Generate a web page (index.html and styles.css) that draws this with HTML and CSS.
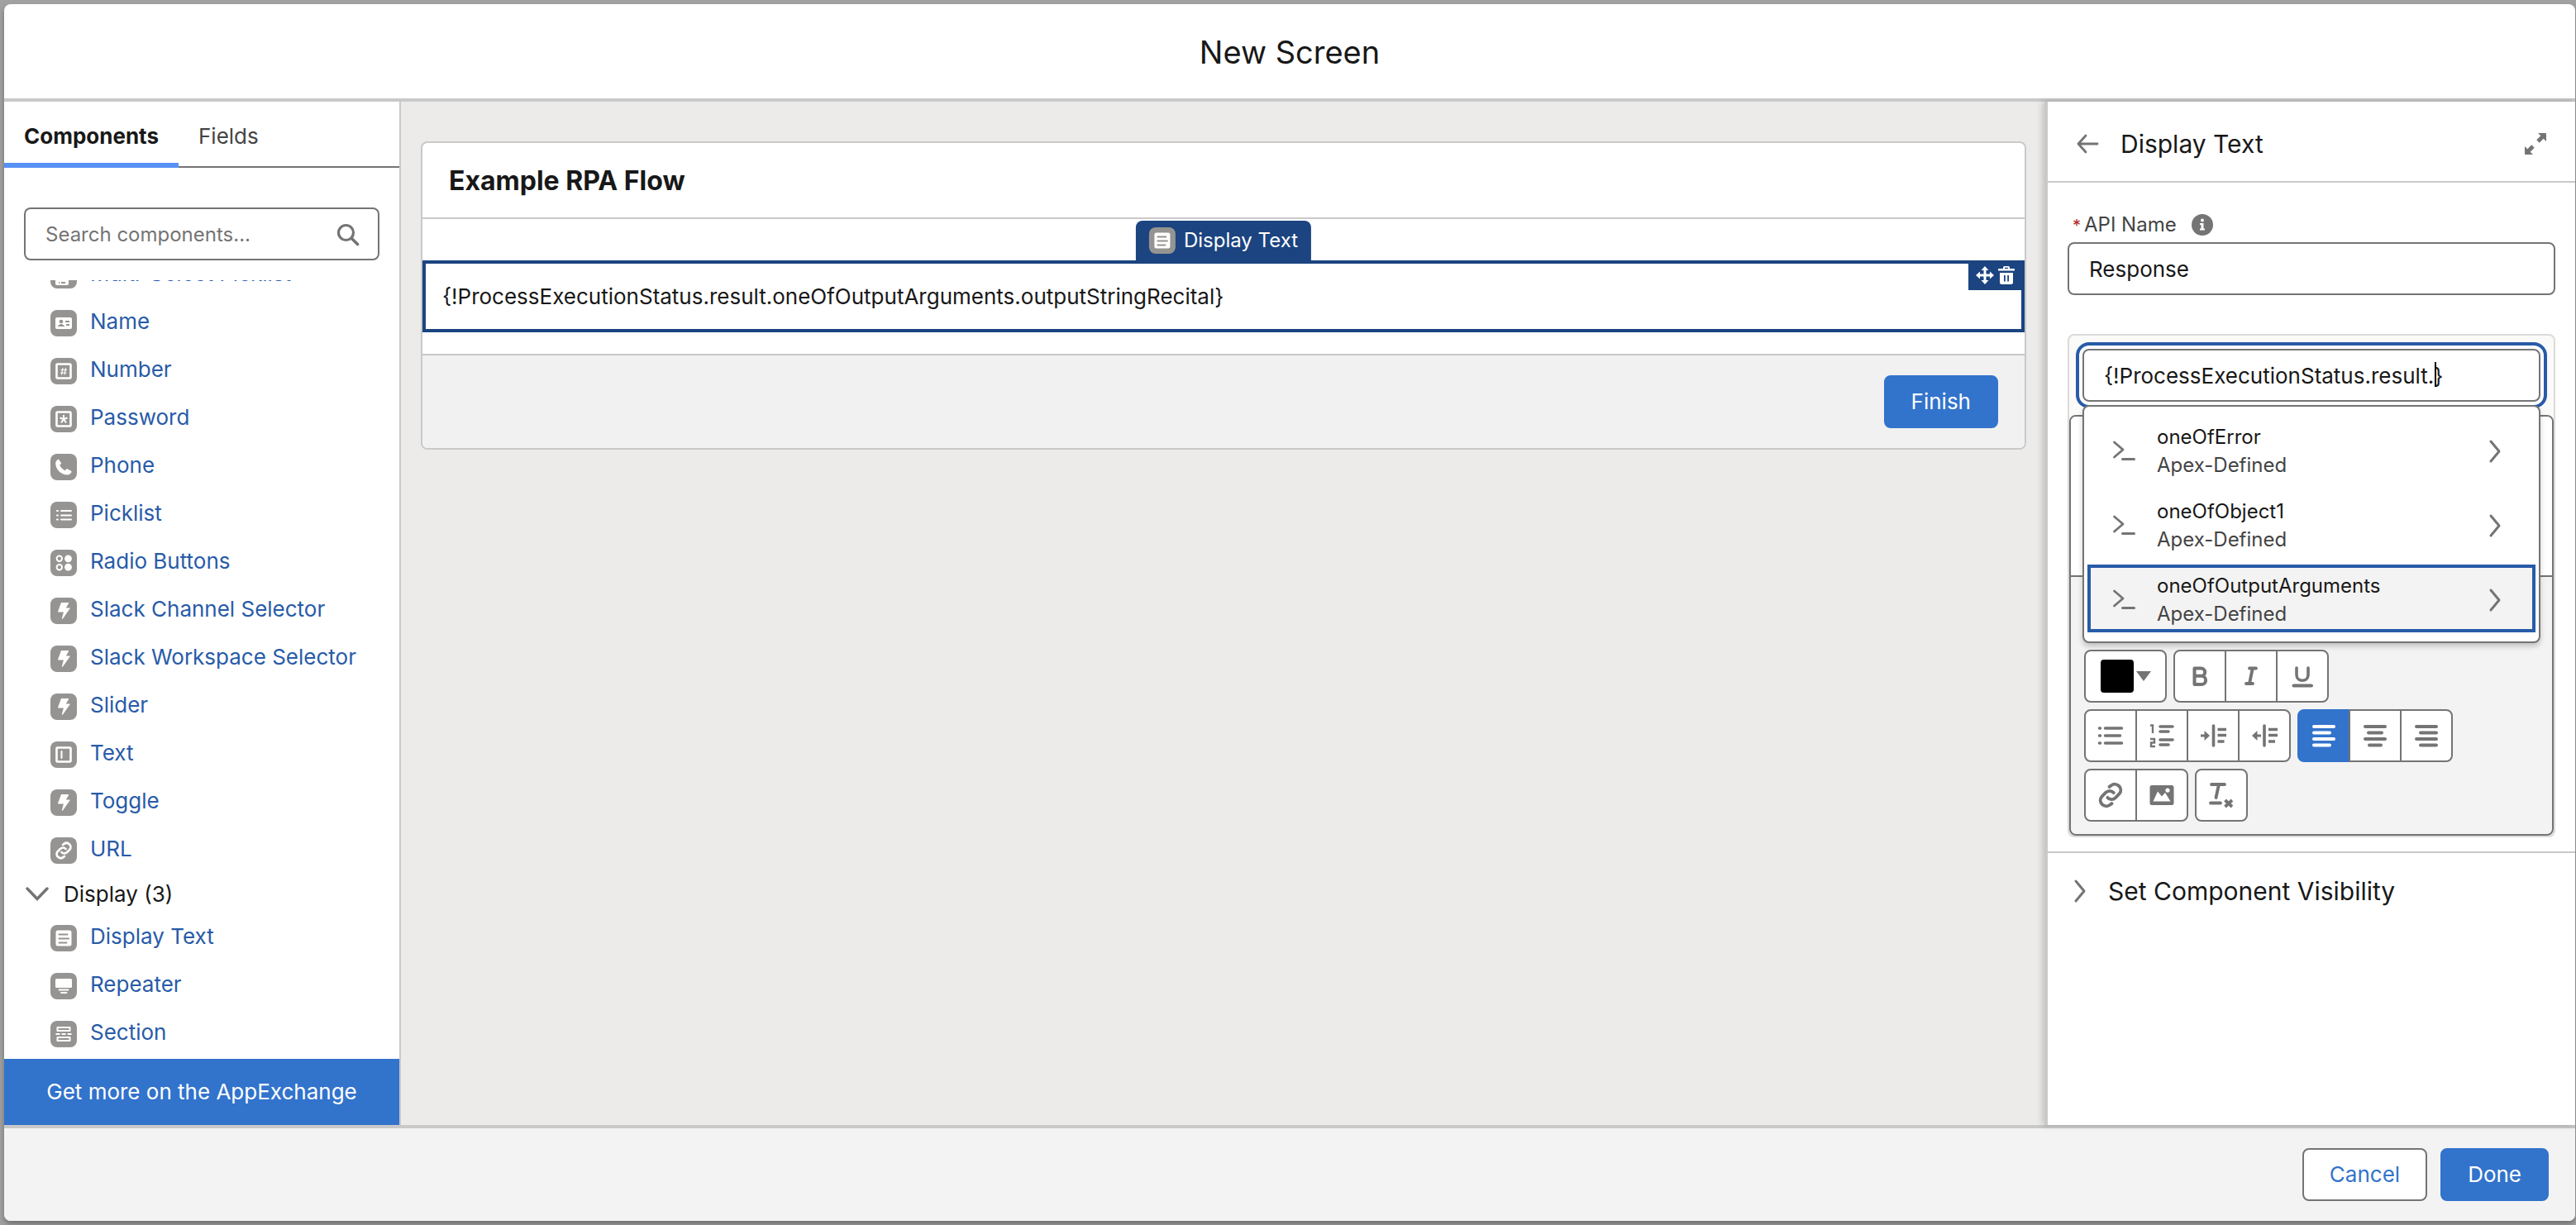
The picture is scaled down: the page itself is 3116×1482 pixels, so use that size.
FILE: index.html
```html
<!DOCTYPE html>
<html lang="en">
<head>
<meta charset="utf-8">
<title>New Screen</title>
<link rel="stylesheet" href="styles.css">
</head>
<body>
<svg class="sprite" aria-hidden="true">
  <symbol id="i-list" viewBox="0 0 32 32"><path d="M8 11h1M8 16.500h1M8 21.500h1M13 11h12M13 16.500h12M13 21.500h12" stroke="currentColor" stroke-width="2" stroke-linecap="round"/></symbol>
  <symbol id="i-multi" viewBox="0 0 32 32"><rect x="6" y="6" width="16" height="22" rx="2" fill="currentColor"/><path d="M10 25h1M13 25h5" stroke="#969492" stroke-width="2"/></symbol>
  <symbol id="i-name" viewBox="0 0 32 32"><rect x="6" y="9" width="20" height="14" rx="2" fill="currentColor"/><circle cx="13" cy="14" r="2.300" fill="#969492"/><path d="M9 20c0-2 3-2 3-3h2c0 1 3 1 3 3zM18 13h5v2h-5zM19 17h4v2h-4z" fill="#969492"/></symbol>
  <symbol id="i-number" viewBox="0 0 32 32"><rect x="7.500" y="7.500" width="17" height="17" rx="1" fill="none" stroke="currentColor" stroke-width="2.600"/><path d="M15 12l-1.500 8.500M18.500 12L17 20.500M12.500 14.500h7.500M12 18h7.500" stroke="currentColor" stroke-width="1.200"/></symbol>
  <symbol id="i-password" viewBox="0 0 32 32"><rect x="7.500" y="7.500" width="17" height="17" rx="1" fill="none" stroke="currentColor" stroke-width="2.600"/><path d="M16 11v5M16 16l-4.500-1.500M16 16l4.500-1.500M16 16l-3 4.500M16 16l3 4.500" stroke="currentColor" stroke-width="2"/></symbol>
  <symbol id="i-phone" viewBox="0 0 32 32"><path d="M6.500 9.500l2-2.300c.7-.7 1.500-.6 2 .2l2.300 3.300c.4.700.3 1.400-.3 1.900l-1.300 1.200c1.300 3 3.400 5.100 6.500 6.500l1.300-1.500c.5-.6 1.200-.7 1.900-.3l4 2.200c.8.500.9 1.300.3 2l-2.200 2.300C13 27.500 4.500 17 6.500 9.500z" fill="currentColor"/></symbol>
  <symbol id="i-radio" viewBox="0 0 32 32"><circle cx="10.800" cy="10.800" r="3.200" fill="none" stroke="currentColor" stroke-width="2"/><circle cx="10.800" cy="21.200" r="3.200" fill="none" stroke="currentColor" stroke-width="2"/><circle cx="21.500" cy="10.800" r="4.400" fill="currentColor"/><circle cx="21.500" cy="21.200" r="4.400" fill="currentColor"/></symbol>
  <symbol id="i-bolt" viewBox="0 0 32 32"><path d="M13 6h8.500c.6 0 .8.500.5 1l-3.200 5.500H23c.6 0 .8.600.4 1L15 25.500c-.5.600-1.300.2-1.100-.5l2-7.500h-6c-.6 0-.9-.5-.7-1z" fill="currentColor"/></symbol>
  <symbol id="i-text" viewBox="0 0 32 32"><rect x="7.500" y="7.500" width="17" height="17" rx="1" fill="none" stroke="currentColor" stroke-width="2.600"/><path d="M13.500 12v8" stroke="currentColor" stroke-width="2" stroke-linecap="round"/></symbol>
  <symbol id="i-link" viewBox="0 0 32 32"><g fill="none" stroke="currentColor" stroke-width="2.700" stroke-linecap="round"><path d="M15 9l1.500-1.100c2-1.500 4.700-1.200 6.500.5 1.800 1.800 1.900 4.600.3 6.400l-3.200 3.300c-2 1.900-4.900 1.900-6.600-.1"/><path d="M17 23l-1.500 1.100c-2 1.500-4.700 1.200-6.500-.5-1.800-1.800-1.900-4.600-.3-6.400l3.200-3.300c2-1.900 4.900-1.900 6.600.1"/></g></symbol>
  <symbol id="i-display" viewBox="0 0 32 32"><rect x="6.500" y="6.500" width="19" height="19" rx="2.500" fill="currentColor"/><path d="M10.500 11.500h10M10.500 16.500h11.500M10.500 21.500h9" stroke="#969492" stroke-width="2" stroke-linecap="round"/></symbol>
  <symbol id="i-repeater" viewBox="0 0 32 32"><rect x="6" y="7" width="20" height="11" rx="1.500" fill="currentColor"/><path d="M10.500 20.500h11M13 24h6.500" stroke="currentColor" stroke-width="1.800" stroke-linecap="round"/></symbol>
  <symbol id="i-section" viewBox="0 0 32 32"><path d="M8.500 8h15v4h-15zM8.500 20h15v4h-15z" fill="none" stroke="currentColor" stroke-width="2" stroke-linejoin="round"/><path d="M6.500 16h5M13.500 16h5M20.500 16h5" stroke="currentColor" stroke-width="2"/></symbol>
  <symbol id="i-right" viewBox="0 0 32 32"><path d="M10 4l10 12-10 12" fill="none" stroke="currentColor" stroke-width="3" stroke-linecap="round" stroke-linejoin="round"/></symbol>
  <symbol id="i-apex" viewBox="0 0 32 32"><path d="M4.500 5l10.500 9L4.500 23" fill="none" stroke="currentColor" stroke-width="2.800" stroke-linecap="round" stroke-linejoin="round"/><path d="M14.500 25.500h14" stroke="currentColor" stroke-width="3" stroke-linecap="round"/></symbol>
</svg>
<div class="modal" role="dialog" aria-labelledby="dialog-title">
  <header class="modal-header"><h1 id="dialog-title">New Screen</h1></header>
  <div class="workspace">
    <aside class="palette">
      <div class="tabs" role="tablist">
        <button class="tab tab-active" role="tab" aria-selected="true">Components</button>
        <button class="tab" role="tab" aria-selected="false">Fields</button>
      </div>
      <div class="search">
        <input class="field" type="search" placeholder="Search components..." aria-label="Search components">
        <svg class="search-icon" viewBox="0 0 28 28"><circle cx="11.500" cy="11.500" r="9" fill="none" stroke="currentColor" stroke-width="3.200"/><path d="M18.500 18.500l7 7" stroke="currentColor" stroke-width="3.600" stroke-linecap="round"/></svg>
      </div>
      <nav class="component-list" aria-label="Components">
        <a class="component" href="#"><svg class="tile"><use href="#i-multi"/></svg>Multi-Select Picklist</a>
        <a class="component" href="#"><svg class="tile"><use href="#i-name"/></svg>Name</a>
        <a class="component" href="#"><svg class="tile"><use href="#i-number"/></svg>Number</a>
        <a class="component" href="#"><svg class="tile"><use href="#i-password"/></svg>Password</a>
        <a class="component" href="#"><svg class="tile"><use href="#i-phone"/></svg>Phone</a>
        <a class="component" href="#"><svg class="tile"><use href="#i-list"/></svg>Picklist</a>
        <a class="component" href="#"><svg class="tile"><use href="#i-radio"/></svg>Radio Buttons</a>
        <a class="component" href="#"><svg class="tile"><use href="#i-bolt"/></svg>Slack Channel Selector</a>
        <a class="component" href="#"><svg class="tile"><use href="#i-bolt"/></svg>Slack Workspace Selector</a>
        <a class="component" href="#"><svg class="tile"><use href="#i-bolt"/></svg>Slider</a>
        <a class="component" href="#"><svg class="tile"><use href="#i-text"/></svg>Text</a>
        <a class="component" href="#"><svg class="tile"><use href="#i-bolt"/></svg>Toggle</a>
        <a class="component" href="#"><svg class="tile"><use href="#i-link"/></svg>URL</a>
        <button class="group-toggle" aria-expanded="true"><svg class="group-chevron" viewBox="0 0 28 18"><path d="M2 2l12 12.500L26 2" fill="none" stroke="currentColor" stroke-width="3.400" stroke-linecap="round"/></svg>Display (3)</button>
        <a class="component" href="#"><svg class="tile"><use href="#i-display"/></svg>Display Text</a>
        <a class="component" href="#"><svg class="tile"><use href="#i-repeater"/></svg>Repeater</a>
        <a class="component" href="#"><svg class="tile"><use href="#i-section"/></svg>Section</a>
      </nav>
      <button class="exchange">Get more on the AppExchange</button>
    </aside>

    <main class="canvas">
      <section class="screen-card">
        <h2 class="screen-title">Example RPA Flow</h2>
        <div class="screen-body">
          <div class="selected">
            <div class="selected-tag"><svg class="tile"><use href="#i-display"/></svg>Display Text</div>
            <p class="selected-text">{!ProcessExecutionStatus.result.oneOfOutputArguments.outputStringRecital}</p>
            <div class="selected-actions">
              <button class="mini" aria-label="Move"><svg viewBox="0 0 24 24"><path d="M12 1l4.500 5h-3v4.500H18v-3l5 4.500-5 4.500v-3h-4.500V18h3L12 23l-4.500-5h3v-4.500H6v3L1 12l5-4.500v3h4.500V6h-3z" fill="currentColor"/></svg></button>
              <button class="mini" aria-label="Delete"><svg viewBox="0 0 24 24"><path fill-rule="evenodd" d="M2.500 4H8V2.500Q8 1 9.500 1h5Q16 1 16 2.500V4h5.500Q22 4 22 5v1.500H2V5q0-1 .5-1zM10 4h4V2.800h-4zM4 9h16v11.500q0 2.500-2.500 2.500h-11Q4 23 4 20.500zM9 12v7.500h1.800V12zM13.200 12v7.500H15V12z" fill="currentColor"/></svg></button>
            </div>
          </div>
        </div>
        <footer class="screen-footer"><button class="button button-primary">Finish</button></footer>
      </section>
    </main>

    <aside class="inspector">
      <header class="inspector-header">
        <button class="icon-button" aria-label="Back"><svg viewBox="0 0 28 28"><path d="M12 4L3 14l9 10M3 14h23" fill="none" stroke="currentColor" stroke-width="2.800" stroke-linecap="round" stroke-linejoin="round"/></svg></button>
        <h2>Display Text</h2>
        <button class="icon-button" aria-label="Expand"><svg viewBox="0 0 28 28"><path d="M17 1h9q1 0 1 1v9l-3.300-3.300-5 5-3.400-3.400 5-5zM1 17l3.300 3.300 5-5 3.400 3.400-5 5L11 27H2q-1 0-1-1z" fill="currentColor"/></svg></button>
      </header>
      <div class="inspector-body">
        <div class="label-row">
          <label for="api-name"><span class="required">*</span>API Name</label>
          <svg class="info" viewBox="0 0 26 26"><circle cx="13" cy="13" r="13" fill="#747474"/><circle cx="13" cy="7.500" r="1.900" fill="#fff"/><path d="M10 11h4.500v6.500H16V19.500h-6v-2h1.500V13H10z" fill="#fff"/></svg>
        </div>
        <input class="field" id="api-name" type="text" value="Response">
        <div class="editor">
          <div class="resource">
            <input class="field field-focus" type="text" value="{!ProcessExecutionStatus.result.}" aria-label="Insert a resource">
            <span class="caret"></span>
            <div class="menu" role="listbox">
              <button class="option" role="option"><svg class="option-icon"><use href="#i-apex"/></svg><span class="option-text"><span>oneOfError</span><span class="option-type">Apex-Defined</span></span><svg class="option-next"><use href="#i-right"/></svg></button>
              <button class="option" role="option"><svg class="option-icon"><use href="#i-apex"/></svg><span class="option-text"><span>oneOfObject1</span><span class="option-type">Apex-Defined</span></span><svg class="option-next"><use href="#i-right"/></svg></button>
              <button class="option option-active" role="option" aria-selected="true"><svg class="option-icon"><use href="#i-apex"/></svg><span class="option-text"><span>oneOfOutputArguments</span><span class="option-type">Apex-Defined</span></span><svg class="option-next"><use href="#i-right"/></svg></button>
            </div>
          </div>
          <div class="rich-text">
            <div class="rich-content"></div>
            <div class="toolbar">
              <div class="tool-row">
                <div class="tools"><button class="tool tool-color" aria-label="Text color"><span class="swatch"></span><svg class="arrow" viewBox="0 0 18 12"><path d="M0 0h18L9 12z" fill="currentColor"/></svg></button></div>
                <div class="tools">
                  <button class="tool" aria-label="Bold"><svg viewBox="0 0 32 32"><path d="M9.500 6.500h8a4.600 4.600 0 010 9.300h-8zM9.500 15.800H18a5 5 0 010 10.200H9.500z" fill="none" stroke="currentColor" stroke-width="4" stroke-linejoin="round"/></svg></button>
                  <button class="tool" aria-label="Italic"><svg viewBox="0 0 32 32"><path d="M14 6.500h8M10 25h8M17.800 6.500L14 25" fill="none" stroke="currentColor" stroke-width="3.800" stroke-linecap="round"/></svg></button>
                  <button class="tool" aria-label="Underline"><svg viewBox="0 0 32 32"><path d="M9 6v8.500c0 9 14 9 14 0V6" fill="none" stroke="currentColor" stroke-width="3.600" stroke-linecap="round"/><path d="M5.500 27.500h21.500" stroke="currentColor" stroke-width="4" stroke-linecap="round"/></svg></button>
                </div>
              </div>
              <div class="tool-row">
                <div class="tools">
                  <button class="tool" aria-label="Bulleted list"><svg viewBox="0 0 32 32"><path d="M2.500 7h1M2.500 16h1M2.500 25h1M9.500 7h20M9.500 16h18M9.500 25h20" stroke="currentColor" stroke-width="3.600" stroke-linecap="round"/></svg></button>
                  <button class="tool" aria-label="Numbered list"><svg viewBox="0 0 32 32"><path d="M2 3.500h3V13M2 20h5v4.500H3V29h5" fill="none" stroke="currentColor" stroke-width="2.400"/><path d="M14 5h15M14 11h10M14 21h15M14 27h10" stroke="currentColor" stroke-width="3.600" stroke-linecap="round"/></svg></button>
                  <button class="tool" aria-label="Indent"><svg viewBox="0 0 32 32"><path d="M16.500 4v24" stroke="currentColor" stroke-width="3.600" stroke-linecap="round"/><path d="M1 14.500h4.500V10l6.500 6-6.500 6v-4.500H1z" fill="currentColor"/><path d="M21.500 8.500h11M21.500 15.500h11M21.500 23h8" stroke="currentColor" stroke-width="3.600"/></svg></button>
                  <button class="tool" aria-label="Outdent"><svg viewBox="0 0 32 32"><path d="M16 4v24" stroke="currentColor" stroke-width="3.600" stroke-linecap="round"/><path d="M12 14.500H7.500V10L1 16l6.500 6v-4.500H12z" fill="currentColor"/><path d="M21 8.500h11M21 15.500h11M21 23h8" stroke="currentColor" stroke-width="3.600"/></svg></button>
                </div>
                <div class="tools">
                  <button class="tool tool-on" aria-label="Align left"><svg viewBox="0 0 32 32"><path d="M4 5h24M4 12.500h19M4 20h24M4 27.500h19" stroke="currentColor" stroke-width="4" stroke-linecap="round"/></svg></button>
                  <button class="tool" aria-label="Align center"><svg viewBox="0 0 32 32"><path d="M4 5h24M8 12.500h16M4 20h24M9 27.500h14" stroke="currentColor" stroke-width="4" stroke-linecap="round"/></svg></button>
                  <button class="tool" aria-label="Align right"><svg viewBox="0 0 32 32"><path d="M4 5h24M9 12.500h19M4 20h24M9 27.500h19" stroke="currentColor" stroke-width="4" stroke-linecap="round"/></svg></button>
                </div>
              </div>
              <div class="tool-row">
                <div class="tools">
                  <button class="tool" aria-label="Link"><svg viewBox="5 5 22 22"><use href="#i-link" width="32" height="32"/></svg></button>
                  <button class="tool" aria-label="Image"><svg viewBox="0 0 32 32"><path fill-rule="evenodd" d="M4 4h24q2.500 0 2.500 2.500v19q0 2.500-2.500 2.500H4q-2.500 0-2.500-2.500v-19Q1.500 4 4 4zm1.500 19.500h21L20 13l-4 4.500-5-6zM23 7.500a2.600 2.600 0 100 5.200 2.600 2.600 0 000-5.200z" fill="currentColor"/></svg></button>
                </div>
                <div class="tools">
                  <button class="tool" aria-label="Remove formatting"><svg viewBox="0 0 32 32"><path d="M4 3h16M13 3l-3.500 16M3 25.500h12" fill="none" stroke="currentColor" stroke-width="3.800" stroke-linecap="round"/><path d="M20.500 22l8.500 8M29 22l-8.500 8" stroke="currentColor" stroke-width="3.800"/></svg></button>
                </div>
              </div>
            </div>
          </div>
        </div>
      </div>
      <button class="visibility" aria-expanded="false"><svg class="visibility-chevron"><use href="#i-right"/></svg>Set Component Visibility</button>
    </aside>
  </div>
  <footer class="modal-footer">
    <button class="button">Cancel</button>
    <button class="button button-primary">Done</button>
  </footer>
</div>
</body>
</html>
```
FILE: styles.css
```css
* { box-sizing: border-box; }
:root {
  --ink: #181818;
  --muted: #444;
  --gray: #747474;
  --line: #c9c9c9;
  --blue: #3273cc;
  --link: #285ba8;
  --navy: #1b4480;
}
body {
  margin: 0;
  min-height: 100vh;
  display: flex;
  padding: 5px 1px 5px 5px;
  background: #a1a1a1;
  color: var(--ink);
  font: 26px/36px Inter, "Liberation Sans", sans-serif;
}
button, input { font: inherit; color: inherit; }
button { margin: 0; padding: 0; border: 0; background: none; cursor: pointer; }
h1, h2, p { margin: 0; }
.sprite { display: none; }

.modal {
  flex: 1;
  display: flex;
  flex-direction: column;
  min-width: 0;
  height: calc(100vh - 10px);
  border-radius: 8px;
  background: #fff;
  overflow: hidden;
  box-shadow: 0 4px 6px rgba(0, 0, 0, .3);
}
.modal-header {
  padding: 34px 32px 32px;
  border-bottom: 4px solid var(--line);
  text-align: center;
}
.modal-header h1 { font-size: 38px; line-height: 48px; font-weight: 400; }
.workspace { flex: 1; min-height: 0; display: flex; }
.modal-footer {
  display: flex;
  justify-content: flex-end;
  gap: 16px;
  padding: 24px 32px;
  border-top: 4px solid var(--line);
  background: #f3f3f3;
}

.button {
  height: 64px;
  padding: 0 31px;
  border: 2px solid var(--gray);
  border-radius: 8px;
  background: #fff;
  color: var(--blue);
}
.button-primary { border-color: var(--blue); background: var(--blue); color: #fff; }
.field {
  display: block;
  width: 100%;
  height: 64px;
  padding: 0 24px;
  border: 2px solid var(--gray);
  border-radius: 8px;
  background: #fff;
  outline: 0;
}
.tile { flex: none; width: 32px; height: 32px; border-radius: 8px; background: #969492; color: #fff; }

/* Component palette */
.palette {
  flex: none;
  display: flex;
  flex-direction: column;
  width: 480px;
  border-right: 2px solid var(--line);
}
.tabs { display: flex; height: 80px; box-shadow: inset 0 -2px var(--gray); }
.tab { padding: 10px 24px 0; color: var(--muted); border-bottom: 6px solid transparent; }
.tab-active { color: var(--ink); font-weight: 700; border-color: #5791f5; }
.search { position: relative; padding: 48px 24px 24px; }
.search .field::placeholder { color: var(--gray); opacity: 1; }
.search .field { font-size: 24px; }
.search-icon { position: absolute; right: 48px; top: 67px; width: 28px; height: 28px; color: var(--gray); }
.component-list {
  flex: 1;
  min-height: 0;
  display: flex;
  flex-direction: column;
  justify-content: flex-end;
  padding-bottom: 1px;
  overflow: hidden;
}
.component {
  flex: none;
  display: flex;
  align-items: center;
  gap: 16px;
  height: 58px;
  padding: 0 0 4px 56px;
  color: var(--link);
  text-decoration: none;
}
.component .tile { margin-top: 4px; }
.group-toggle { flex: none; display: flex; align-items: center; gap: 18px; height: 48px; padding-left: 26px; }
.group-chevron { width: 28px; height: 18px; color: var(--gray); }
.exchange { height: 80px; background: var(--blue); color: #fff; }

/* Screen canvas */
.canvas { flex: 1; min-width: 0; padding: 48px 22px 48px 24px; background: #ecebea; }
.screen-card { border: 2px solid var(--line); border-radius: 8px; background: #fff; overflow: hidden; }
.screen-title {
  padding: 26px 32px 24px;
  border-bottom: 2px solid var(--line);
  font-size: 32px;
  line-height: 40px;
  font-weight: 700;
}
.screen-body { padding: 50px 0 26px; }
.selected { position: relative; border: 4px solid var(--navy); }
.selected-text { padding: 22px 20px 21px; }
.selected-tag {
  position: absolute;
  left: 50%;
  bottom: calc(100% + 4px);
  transform: translateX(-50%);
  display: flex;
  align-items: center;
  gap: 10px;
  height: 48px;
  padding: 0 16px;
  border-radius: 8px 8px 0 0;
  background: var(--navy);
  color: #fff;
  font-size: 24px;
  white-space: nowrap;
}
.selected-actions {
  position: absolute;
  top: 0;
  right: 0;
  display: flex;
  gap: 2px;
  padding: 2px 6px 6px 8px;
  background: var(--navy);
  color: #fff;
}
.mini { width: 24px; height: 24px; }
.mini svg { display: block; width: 24px; height: 24px; }
.screen-footer { display: flex; justify-content: flex-end; padding: 24px 32px; border-top: 2px solid var(--line); background: #f1f1f1; }

/* Inspector */
.inspector {
  position: relative;
  flex: none;
  width: 642px;
  border-left: 4px solid var(--line);
  background: #fff;
  box-shadow: -2px 0 8px rgba(0, 0, 0, .2);
}
.inspector-header {
  display: flex;
  align-items: center;
  height: 98px;
  padding: 6px 34px 0;
  border-bottom: 2px solid var(--line);
}
.inspector-header h2 { flex: 1; margin-left: 26px; font-size: 30px; line-height: 40px; font-weight: 400; }
.icon-button { width: 28px; height: 28px; color: var(--gray); }
.icon-button svg { display: block; width: 28px; height: 28px; }
.inspector-body { padding: 32px 24px 17px; border-bottom: 2px solid var(--line); }
.label-row { display: flex; align-items: center; gap: 18px; height: 38px; margin-bottom: 2px; padding-left: 6px; color: var(--muted); font-size: 24px; }
.required { margin-right: 4px; color: #b3261e; font-size: 20px; }
.info { width: 26px; height: 26px; }
.editor { margin-top: 47px; border: 2px solid #dddbda; border-radius: 8px; background: #fafaf9; }
.resource { position: relative; padding: 16px; }
.field-focus { box-shadow: 0 0 0 4px #fff, 0 0 0 8px var(--link); }
.caret { position: absolute; left: 442px; top: 32px; width: 2px; height: 30px; background: #000; }
.menu {
  position: absolute;
  z-index: 1;
  left: 16px;
  right: 16px;
  top: 84px;
  padding: 11px 4px;
  border: 2px solid var(--gray);
  border-radius: 8px;
  background: #fff;
  box-shadow: 0 4px 6px rgba(0, 0, 0, .2);
}
.option {
  display: flex;
  align-items: center;
  width: 100%;
  height: 82px;
  margin-top: 8px;
  padding: 4px 28px 0 24px;
  border: 4px solid transparent;
  text-align: left;
  font-size: 24px;
  line-height: 34px;
}
.option:first-child { margin-top: 0; }
.option-active { border-color: var(--link); background: #f3f3f3; }
.option-text { flex: 1; display: flex; flex-direction: column; margin-left: 24px; }
.option-type { color: var(--muted); }
.option-icon, .option-next { width: 32px; height: 32px; color: var(--gray); }
.rich-text { border: 2px solid var(--gray); border-radius: 8px; overflow: hidden; background: #f3f3f3; }
.rich-content { height: 194px; border-bottom: 2px solid var(--gray); background: #fff; }
.toolbar { display: flex; flex-direction: column; gap: 8px; padding: 88px 16px 15px; }
.tool-row { display: flex; flex-wrap: wrap; gap: 8px; }
.tools { display: flex; }
.tool {
  display: flex;
  align-items: center;
  justify-content: center;
  width: 64px;
  height: 64px;
  border: 2px solid var(--gray);
  background: #fff;
  color: var(--gray);
}
.tool + .tool { margin-left: -2px; }
.tool:first-child { border-top-left-radius: 8px; border-bottom-left-radius: 8px; }
.tool:last-child { border-top-right-radius: 8px; border-bottom-right-radius: 8px; }
.tool svg { width: 32px; height: 32px; }
.tool-on { border-color: var(--blue); background: var(--blue); color: #fff; }
.tool-color { width: 100px; gap: 3px; }
.swatch { width: 40px; height: 40px; border-radius: 4px; background: #000; }
.tool .arrow { width: 18px; height: 12px; }
.visibility { display: flex; align-items: center; width: 100%; height: 92px; padding-left: 24px; gap: 17px; font-size: 30px; text-align: left; }
.visibility-chevron { width: 32px; height: 32px; color: var(--gray); }
```
